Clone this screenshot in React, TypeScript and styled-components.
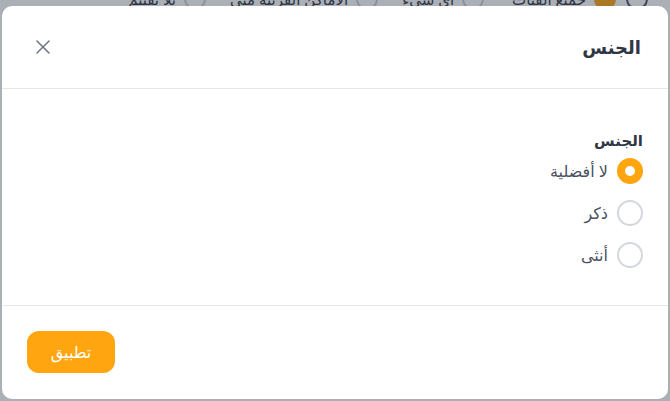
import React, { useState } from "react";
import styled, { createGlobalStyle } from "styled-components";
import { X } from "lucide-react";

const GlobalStyle = createGlobalStyle`
  html, body {
    margin: 0;
    padding: 0;
    width: 670px;
    height: 401px;
    overflow: hidden;
    background: #ffffff;
    font-family: "Noto Sans", "DejaVu Sans", sans-serif;
  }
`;

const Page = styled.div`
  position: relative;
  width: 670px;
  height: 401px;
  overflow: hidden;
  direction: rtl;
`;

// the filter bar of the page behind the modal, mostly hidden
const FilterRow = styled.div`
  display: flex;
  align-items: center;
  margin-top: -12px;
  padding-right: 22px;
  gap: 10px;
`;

const FilterOption = styled.div<{ $gap?: number }>`
  display: flex;
  align-items: center;
  gap: 8px;
  margin-left: ${(p) => p.$gap ?? 14}px;
  font-size: 15px;
  color: #2d3342;
  white-space: nowrap;
`;

const FilterDot = styled.span<{ $on?: boolean; $dark?: boolean }>`
  width: 22px;
  height: 22px;
  border-radius: 50%;
  box-sizing: border-box;
  border: ${(p) =>
    p.$on ? "none" : p.$dark ? "2px solid #4a5161" : "2px solid #c9ced6"};
  background: ${(p) => (p.$on ? "#ffa50f" : "#fff")};
`;

const Overlay = styled.div`
  position: absolute;
  inset: 0;
  background: rgba(45, 55, 72, 0.4);
  display: flex;
  padding: 6px 2px 2px 2px;
  box-sizing: border-box;
`;

const Modal = styled.div`
  flex: 1;
  display: flex;
  flex-direction: column;
  background: #fff;
  border-radius: 10px;
  overflow: hidden;
  direction: rtl;
`;

const Header = styled.div`
  height: 82px;
  flex-shrink: 0;
  display: flex;
  align-items: center;
  justify-content: space-between;
  padding: 0 27px 0 29px;
  border-bottom: 1px solid #e4e6eb;
`;

const Title = styled.h2`
  margin: 0;
  font-size: 18px;
  font-weight: 700;
  color: #2f3644;
`;

const CloseButton = styled.button`
  border: none;
  background: none;
  padding: 0;
  width: 24px;
  height: 24px;
  display: flex;
  align-items: center;
  justify-content: center;
  color: #6b7280;
  cursor: pointer;
`;

const Body = styled.div`
  flex: 1;
  padding: 40px 25px 0;
  border-bottom: 1px solid #e4e6eb;
`;

const GroupLabel = styled.div`
  font-size: 15px;
  font-weight: 600;
  color: #2f3644;
  line-height: 22px;
  margin-bottom: 7px;
`;

const Options = styled.div`
  display: flex;
  flex-direction: column;
  gap: 16px;
`;

const OptionRow = styled.label`
  display: flex;
  align-items: center;
  gap: 9px;
  font-size: 16px;
  color: #4a5061;
  cursor: pointer;
  line-height: 26px;
`;

const RadioCircle = styled.span<{ $checked: boolean }>`
  width: 26px;
  height: 26px;
  box-sizing: border-box;
  border-radius: 50%;
  flex-shrink: 0;
  background: #fff;
  border: ${(p) => (p.$checked ? "8px solid #ffa50f" : "2px solid #d3d7de")};
`;

const Footer = styled.div`
  height: 93px;
  flex-shrink: 0;
  display: flex;
  align-items: center;
  padding: 0 25px;
  direction: ltr;
`;

const ApplyButton = styled.button`
  width: 88px;
  height: 42px;
  border: none;
  border-radius: 12px;
  background: #ffa50f;
  color: #fff;
  font-family: inherit;
  font-size: 16px;
  cursor: pointer;
  margin-top: -1px;
`;

const choices = ["لا أفضلية", "ذكر", "أنثى"];

export default function App() {
  const [value, setValue] = useState(choices[0]);
  return (
    <>
      <GlobalStyle />
      <Page>
        <FilterRow>
          <FilterDot $dark />
          <FilterOption $gap={18}>
            <FilterDot $on />
            جميع الفئات
          </FilterOption>
          <FilterOption>
            <FilterDot />
            أي شيء
          </FilterOption>
          <FilterOption>
            <FilterDot />
            الأماكن القريبة مني
          </FilterOption>
          <FilterOption>
            <FilterDot />
            بلا تقييم
          </FilterOption>
        </FilterRow>
        <Overlay>
          <Modal>
            <Header>
              <Title>الجنس</Title>
              <CloseButton aria-label="close">
                <X size={24} strokeWidth={1.5} />
              </CloseButton>
            </Header>
            <Body>
              <GroupLabel>الجنس</GroupLabel>
              <Options>
                {choices.map((c) => (
                  <OptionRow key={c} onClick={() => setValue(c)}>
                    <RadioCircle $checked={value === c} />
                    {c}
                  </OptionRow>
                ))}
              </Options>
            </Body>
            <Footer>
              <ApplyButton>تطبيق</ApplyButton>
            </Footer>
          </Modal>
        </Overlay>
      </Page>
    </>
  );
}
